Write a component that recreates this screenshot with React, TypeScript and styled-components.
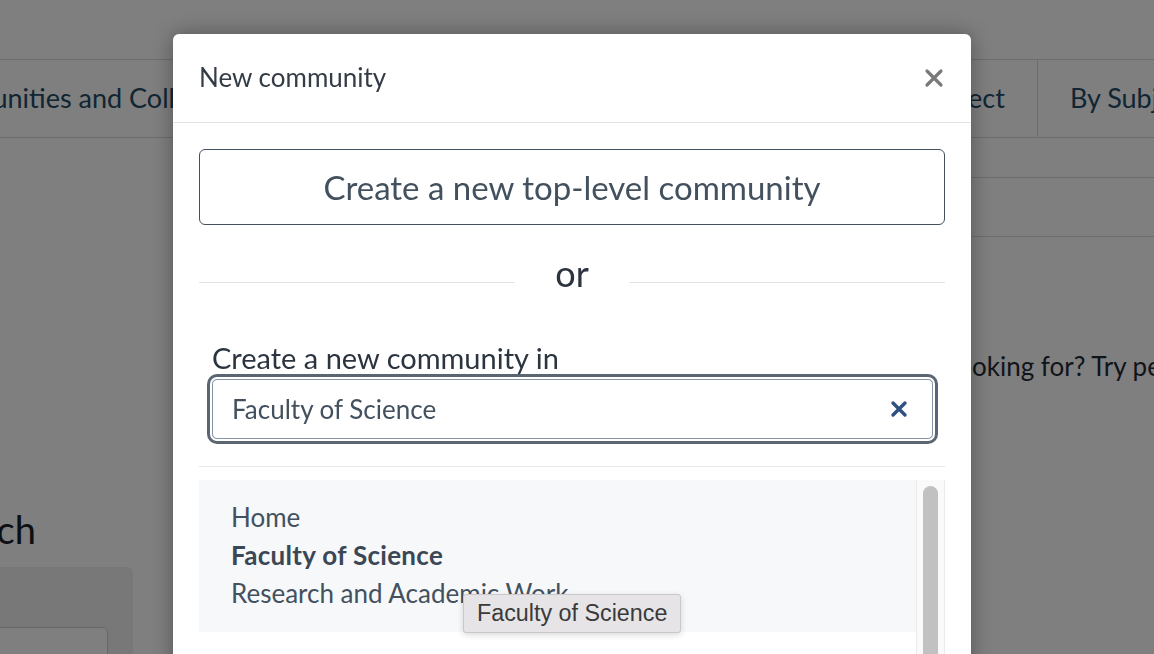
import { FC } from "react";
import styled, { createGlobalStyle } from "styled-components";

const GlobalStyle = createGlobalStyle`
  html, body {
    margin: 0;
    padding: 0;
    background: #ffffff;
    font-family: Lato, "Open Sans", sans-serif;
    overflow: hidden;
  }
`;

const App: FC = () => {
  return (
    <>
      <GlobalStyle />
      <Page>
        <TopBar />
        <NavBar>
          <NavTab>Communities and Collections</NavTab>
          <NavTab $grow>By Subject</NavTab>
          <NavTab $width={300}>By Subject Category</NavTab>
        </NavBar>
        <SearchRow />
        <Hint>Can't find what you are looking for? Try performing a search</Hint>
        <Heading>Search</Heading>
        <SearchCard>
          <SearchInput />
        </SearchCard>
      </Page>

      <Overlay>
        <Modal>
          <Header>
            <Title>New community</Title>
            <Close aria-label="Close">
              <svg width="20" height="20" viewBox="0 0 20 20">
                <path
                  d="M3 3 L17 17 M17 3 L3 17"
                  stroke="#7a7a7a"
                  strokeWidth="3.2"
                  strokeLinecap="round"
                />
              </svg>
            </Close>
          </Header>
          <Body>
            <TopLevelButton>Create a new top-level community</TopLevelButton>
            <OrRow>
              <Rule />
              <OrText>or</OrText>
              <Rule />
            </OrRow>
            <Field>
              <Label>Create a new community in</Label>
              <InputBox>
                <InputText>Faculty of Science</InputText>
                <Clear>
                  <svg width="18" height="18" viewBox="0 0 18 18">
                    <path
                      d="M3 3 L15 15 M15 3 L3 15"
                      stroke="#2f5080"
                      strokeWidth="3.4"
                      strokeLinecap="round"
                    />
                  </svg>
                </Clear>
              </InputBox>
            </Field>
            <Divider />
            <ResultArea>
              <ResultList>
                <Item>Home</Item>
                <Item $active>Faculty of Science</Item>
                <Item>Research and Academic Work</Item>
                <Tooltip>Faculty of Science</Tooltip>
              </ResultList>
              <Track>
                <Thumb />
              </Track>
            </ResultArea>
          </Body>
        </Modal>
      </Overlay>
    </>
  );
};

export default App;

const Page = styled.div`
  width: 1154px;
  height: 654px;
  overflow: hidden;
  color: #1f2b36;
  font-family: Lato, "Open Sans", sans-serif;
`;

const TopBar = styled.div`
  height: 59px;
  border-bottom: 1px solid #dadada;
`;

const NavBar = styled.div`
  display: flex;
  height: 77px;
  width: 1459px;
  margin-left: -117px;
  border-bottom: 1px solid #dadada;
`;

const NavTab = styled.div<{ $grow?: boolean; $width?: number }>`
  flex: ${(p) => (p.$grow ? "1 1 auto" : p.$width ? `0 0 ${p.$width}px` : "0 0 auto")};
  display: flex;
  align-items: center;
  justify-content: ${(p) => (p.$grow ? "flex-end" : "flex-start")};
  padding: 0 32px 3px;
  box-sizing: border-box;
  border-right: 1px solid #dadada;
  color: #234b66;
  font-size: 27px;
  white-space: nowrap;

  &:last-child {
    border-right: none;
  }
`;

const SearchRow = styled.div`
  height: 58px;
  margin-top: 39px;
  margin-left: 300px;
  border-top: 1px solid #dadada;
  border-bottom: 1px solid #dadada;
`;

const Hint = styled.div`
  margin-top: 113px;
  margin-left: 681px;
  font-size: 26px;
  white-space: nowrap;
  color: #1f2b36;
`;

const Heading = styled.div`
  margin-top: 124px;
  margin-left: -76px;
  font-size: 38px;
  line-height: 46px;
  color: #16202a;
`;

const SearchCard = styled.div`
  margin-top: 15px;
  margin-left: -20px;
  width: 153px;
  height: 100px;
  background: #f0f0f0;
  border-radius: 6px;
  padding-top: 60px;
  box-sizing: border-box;
`;

const SearchInput = styled.div`
  width: 126px;
  height: 40px;
  border: 1px solid #cfcfcf;
  border-radius: 6px;
  background: #ffffff;
`;

const Overlay = styled.div`
  position: fixed;
  inset: 0;
  background: rgba(0, 0, 0, 0.5);
  display: flex;
  justify-content: flex-start;
  padding-left: 173px;
  padding-top: 34px;
  overflow: hidden;
`;

const Modal = styled.div`
  width: 798px;
  height: 700px;
  background: #ffffff;
  border-radius: 6px;
  box-shadow: 0 0 22px rgba(0, 0, 0, 0.35);
  display: flex;
  flex-direction: column;
  color: #43515f;
  font-family: Lato, "Open Sans", sans-serif;
`;

const Header = styled.div`
  height: 89px;
  box-sizing: border-box;
  display: flex;
  align-items: center;
  justify-content: space-between;
  padding: 0 26px;
  border-bottom: 1px solid #e3e3e3;
`;

const Title = styled.div`
  font-size: 26px;
  color: #343c46;
  margin-top: -2px;
`;

const Close = styled.div`
  display: flex;
  align-items: center;
  justify-content: center;
  width: 24px;
  height: 24px;
  margin-right: -1px;
`;

const Body = styled.div`
  padding: 26px 26px 0;
  display: flex;
  flex-direction: column;
`;

const TopLevelButton = styled.div`
  height: 76px;
  box-sizing: border-box;
  border: 1px solid #43515f;
  border-radius: 6px;
  display: flex;
  align-items: center;
  justify-content: center;
  font-size: 33px;
  color: #43515f;
`;

const OrRow = styled.div`
  display: flex;
  align-items: center;
  height: 96px;
`;

const Rule = styled.div`
  flex: 1;
  height: 1px;
  background: #e3e3e3;
  margin-top: 18px;
`;

const OrText = styled.div`
  padding: 0 40px;
  font-size: 36px;
  color: #2c353f;
`;

const Field = styled.div`
  display: flex;
  flex-direction: column;
  padding: 0 12px 0 13px;
  margin-top: 20px;
`;

const Label = styled.div`
  font-size: 29px;
  line-height: 34px;
  color: #2c353f;
`;

const InputBox = styled.div`
  margin: 4px 0 0;
  height: 60px;
  box-sizing: border-box;
  border: 1px solid #8796a6;
  border-radius: 5px;
  box-shadow: 0 0 0 2px #ffffff, 0 0 0 5px #5b6672;
  display: flex;
  align-items: center;
  justify-content: space-between;
  padding: 0 24px 0 19px;
`;

const InputText = styled.div`
  font-size: 26px;
  color: #43515f;
`;

const Clear = styled.div`
  display: flex;
  align-items: center;
`;

const Divider = styled.div`
  height: 1px;
  background: #e8e8e8;
  margin-top: 27px;
`;

const ResultArea = styled.div`
  display: flex;
  margin-top: 13px;
  height: 200px;
`;

const ResultList = styled.div`
  position: relative;
  flex: 1;
  align-self: flex-start;
  background: #f7f8f9;
  padding: 18px 32px 20px;
  display: flex;
  flex-direction: column;
`;

const Item = styled.div<{ $active?: boolean }>`
  font-size: 26px;
  line-height: 38px;
  font-weight: ${(p) => (p.$active ? 700 : 400)};
  color: ${(p) => (p.$active ? "#3b4754" : "#43515f")};
  letter-spacing: ${(p) => (p.$active ? "0.3px" : "0")};
`;

const Tooltip = styled.div`
  position: absolute;
  left: 264px;
  top: 114px;
  padding: 5px 13px;
  background: #e6e4e7;
  border: 1px solid #c9c7ca;
  border-radius: 3px;
  box-shadow: 0 2px 6px rgba(0, 0, 0, 0.15);
  font-family: "Liberation Sans", Arial, sans-serif;
  font-size: 23.3px;
  line-height: 27px;
  color: #3a3a3a;
  white-space: nowrap;
`;

const Track = styled.div`
  flex: 0 0 29px;
  background: #fafafa;
  border-left: 1px solid #ebebeb;
  border-right: 1px solid #ebebeb;
  box-sizing: border-box;
  padding: 6px 6px 0 6px;
`;

const Thumb = styled.div`
  height: 300px;
  background: #c1c1c1;
  border-radius: 8px;
`;
